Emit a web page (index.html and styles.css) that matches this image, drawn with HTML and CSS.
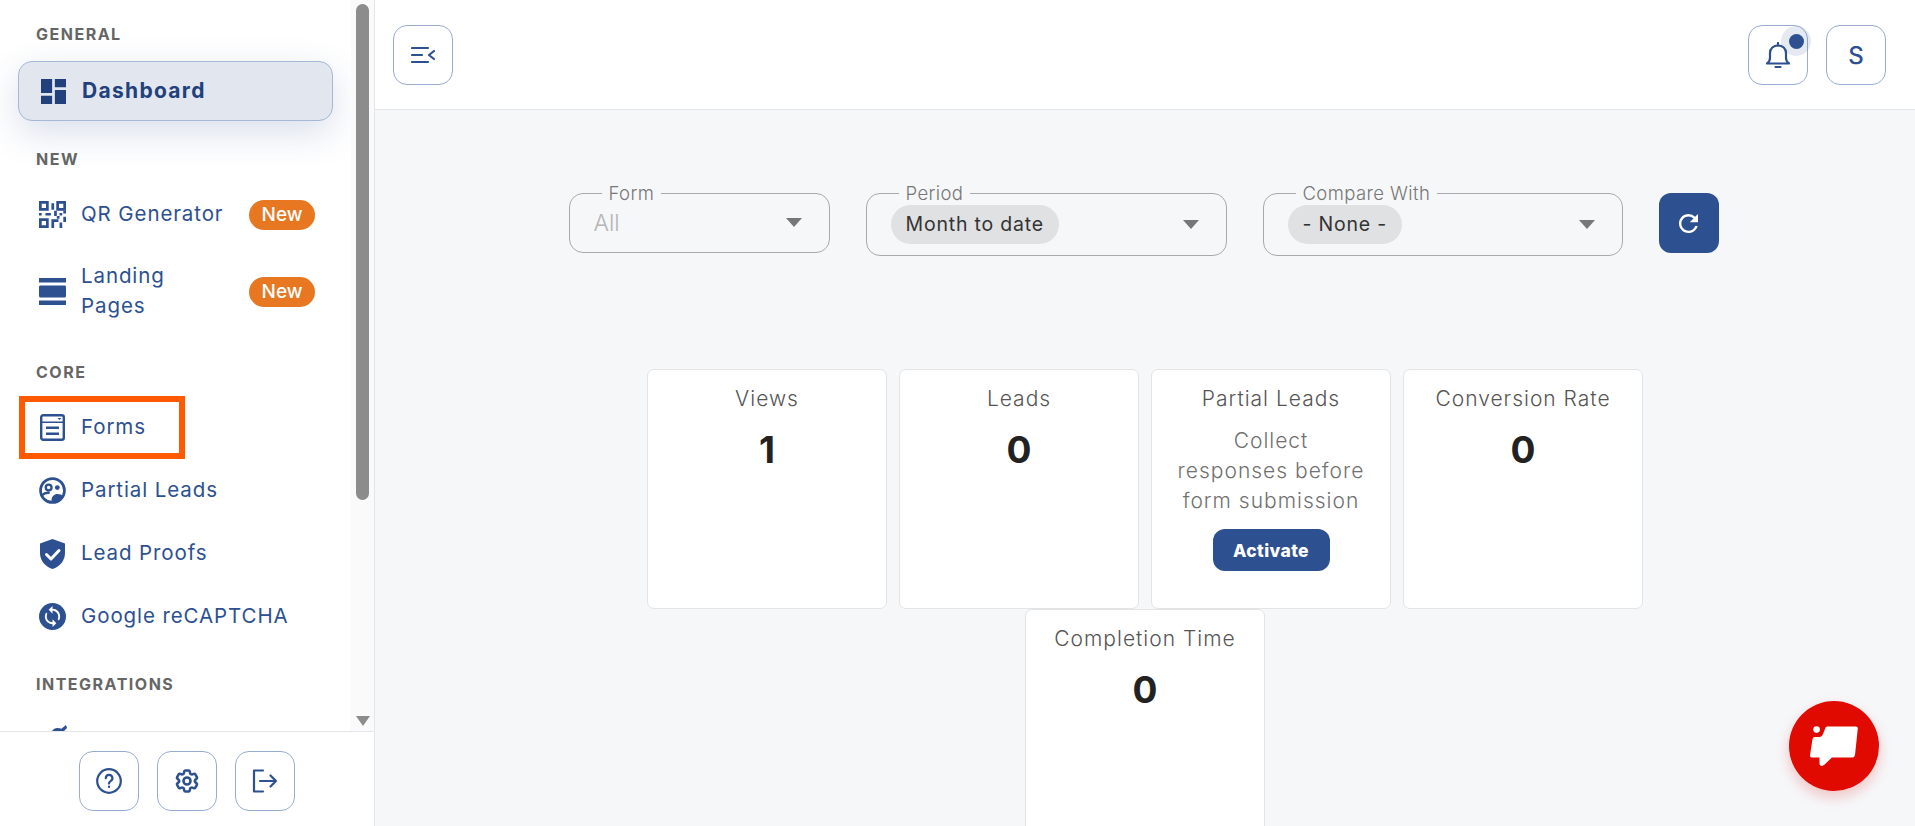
FILE: index.html
```html
<!DOCTYPE html>
<html lang="en">
<head>
<meta charset="utf-8">
<title>Dashboard</title>
<link rel="stylesheet" href="styles.css">
</head>
<body>
<div class="app">
  <aside class="sidebar">
    <div class="sidebar-top">
      <nav class="nav">
        <div class="section first">GENERAL</div>
        <a class="item active">
          <svg class="icon" viewBox="3 3 18 18"><path d="M3 13h8V3H3v10zm0 8h8v-6H3v6zm10 0h8V11h-8v10zm0-18v6h8V3h-8z"/></svg>
          <span class="label">Dashboard</span>
        </a>
        <div class="section new">NEW</div>
        <a class="item">
          <svg class="icon" viewBox="0 0 25 25"><path fill-rule="evenodd" d="M0 0h9v9H0zM2.500 2.500v4h4v-4zM16 0h9v9h-9zM18.500 2.500v4h4v-4zM0 16h9v9H0zM2.500 18.500v4h4v-4z"/><path d="M11.500 2h2.500v6h-2.500zM0 11h2.500v2.500H0zM6 11h5v2.500H6zM14 9h2.500v5H14zM19 11h2.500v2.500H19zM22.500 9H25v2.500h-2.500zM16.500 14h2.500v2.500h-2.500zM22.500 14.500H25v5h-2.500zM11.500 17H14v8h-2.500zM14 17h4v2.500h-4zM19 20h2.500v5H19z"/></svg>
          <span class="label">QR Generator</span>
          <span class="badge">New</span>
        </a>
        <a class="item tall">
          <svg class="icon" viewBox="2 3 19 18" preserveAspectRatio="none"><path d="M2 21h19v-3H2v3zM20 8H3c-.55 0-1 .45-1 1v6c0 .55.45 1 1 1h17c.55 0 1-.45 1-1V9c0-.55-.45-1-1-1zM2 3v3h19V3H2z"/></svg>
          <span class="label">Landing<br>Pages</span>
          <span class="badge">New</span>
        </a>
        <div class="section">CORE</div>
        <a class="item">
          <svg class="icon" viewBox="0 0 25 27"><rect class="stroke" x="1.200" y="1.200" width="22.600" height="24.600" rx="2"/><path d="M1 7.500h23v1.500H1zM6 12.500h13v2.500H6zM6 18.500h13v2.500H6zM17.500 4h4l-2 2z"/></svg>
          <span class="label">Forms</span>
          <span class="mark"></span>
        </a>
        <a class="item">
          <svg class="icon" viewBox="0 0 28 28"><circle class="stroke thick" cx="14" cy="14" r="12.400"/><circle class="stroke" cx="10" cy="11" r="3"/><circle cx="19" cy="11" r="2.500"/><path d="M13 26.500v-3c0-3.500 3-6 6-6 2.500 0 5 .8 6.500 2-2 4-6 7-12.500 7z"/><path class="stroke" d="M3 19c2-2 5-3 8-2.500"/></svg>
          <span class="label">Partial Leads</span>
        </a>
        <a class="item">
          <svg class="icon shield" viewBox="0 0 25 30"><path d="M12.500 0 25 4.500V14c0 7.500-5 13.500-12.500 16C5 27.500 0 21.500 0 14V4.500z"/><path class="check" d="M6.500 15.500l4.500 4.500 8-8.500"/></svg>
          <span class="label">Lead Proofs</span>
        </a>
        <a class="item">
          <svg class="icon" viewBox="0 0 24 24"><circle cx="12" cy="12" r="12"/><path class="sync" d="M12 4V1L8 5l4 4V6c3.310 0 6 2.690 6 6 0 1.010-.25 1.970-.7 2.800l1.460 1.460C19.540 15.030 20 13.570 20 12c0-4.420-3.580-8-8-8zm0 14c-3.310 0-6-2.690-6-6 0-1.010.25-1.970.7-2.800L5.240 7.740C4.460 8.970 4 10.430 4 12c0 4.420 3.580 8 8 8v3l4-4-4-4v3z"/></svg>
          <span class="label">Google reCAPTCHA</span>
        </a>
        <div class="section last">INTEGRATIONS</div>
        <a class="item">
          <svg class="icon open" viewBox="0 0 27 27"><path d="M12 8q2-5 6-5t4 1l5-4 1 3-4 4v10H12z"/></svg>
          <span class="label">All Integrations</span>
        </a>
      </nav>
      <div class="track">
        <div class="thumb"></div>
        <div class="track-arrow"></div>
      </div>
    </div>
    <div class="sidebar-foot">
      <button class="square">
        <svg class="line" width="26" height="26" viewBox="0 0 26 26"><circle cx="13" cy="13" r="11.800"/><path d="M9.800 10.200a3.300 3.300 0 1 1 4.800 2.900c-1 .6-1.600 1.300-1.600 2.500"/><path d="M13 18.500v.6"/></svg>
      </button>
      <button class="square">
        <svg class="line" width="28" height="28" viewBox="0 0 24 24"><path d="M9.594 3.940c.09-.542.56-.94 1.110-.94h2.593c.55 0 1.020.398 1.110.94l.213 1.281c.063.374.313.686.645.870.074.04.147.083.22.127.325.196.72.257 1.075.124l1.217-.456a1.125 1.125 0 0 1 1.370.49l1.296 2.247a1.125 1.125 0 0 1-.26 1.431l-1.003.827c-.293.241-.438.613-.43.992a7.723 7.723 0 0 1 0 .255c-.008.378.137.75.43.991l1.004.827c.424.35.534.955.26 1.430l-1.298 2.247a1.125 1.125 0 0 1-1.369.491l-1.217-.456c-.355-.133-.75-.072-1.076.124a6.470 6.470 0 0 1-.22.128c-.331.183-.581.495-.644.869l-.213 1.281c-.09.543-.56.94-1.110.94h-2.594c-.55 0-1.019-.398-1.110-.94l-.213-1.281c-.062-.374-.312-.686-.644-.870a6.520 6.520 0 0 1-.22-.127c-.325-.196-.72-.257-1.076-.124l-1.217.456a1.125 1.125 0 0 1-1.369-.49l-1.297-2.247a1.125 1.125 0 0 1 .26-1.431l1.004-.827c.292-.24.437-.613.43-.991a6.932 6.932 0 0 1 0-.255c.007-.38-.138-.751-.43-.992l-1.004-.827a1.125 1.125 0 0 1-.26-1.430l1.297-2.247a1.125 1.125 0 0 1 1.370-.491l1.216.456c.356.133.751.072 1.076-.124.072-.044.146-.086.22-.128.332-.183.582-.495.644-.869l.214-1.280Z"/><circle cx="12" cy="12" r="3"/></svg>
      </button>
      <button class="square">
        <svg class="line" width="26" height="24" viewBox="0 0 26 24"><path d="M11 1.500H2v21h9"/><path d="M8 12h16M18.500 6.500 24 12l-5.500 5.500"/></svg>
      </button>
    </div>
  </aside>

  <main class="main">
    <header class="topbar">
      <button class="square">
        <svg class="line" width="24" height="18" viewBox="0 0 24 18"><path d="M1 2h16M1 9h10M1 16h16M23 5l-5 4 5 4"/></svg>
      </button>
      <div class="topbar-right">
        <button class="square bell">
          <svg class="line" width="24" height="27" viewBox="0 0 24 27"><path d="M1 21.500h22c-2-1.500-3-3-3-5.500v-5c0-4.500-3.500-7.500-8-7.500S4 6.500 4 11v5c0 2.500-1 4-3 5.500z"/><path d="M12 1v2.500"/><path d="M9.500 25h5"/></svg>
          <span class="dot"></span>
        </button>
        <button class="square avatar">S</button>
      </div>
    </header>

    <section class="content">
      <div class="filters">
        <fieldset class="select short">
          <legend>Form</legend>
          <span class="placeholder">All</span>
          <span class="caret"></span>
        </fieldset>
        <fieldset class="select period">
          <legend>Period</legend>
          <span class="chip">Month to date</span>
          <span class="caret"></span>
        </fieldset>
        <fieldset class="select compare">
          <legend>Compare With</legend>
          <span class="chip">- None -</span>
          <span class="caret"></span>
        </fieldset>
        <button class="refresh">
          <svg width="19" height="19" viewBox="4 4 16 16"><path d="M17.650 6.350A7.958 7.958 0 0 0 12 4c-4.420 0-7.990 3.580-7.990 8s3.570 8 7.990 8c3.730 0 6.840-2.550 7.730-6h-2.080A5.990 5.990 0 0 1 12 18c-3.310 0-6-2.690-6-6s2.690-6 6-6c1.660 0 3.140.69 4.220 1.780L13 11h7V4l-2.350 2.350z"/></svg>
        </button>
      </div>

      <div class="cards">
        <div class="card"><div class="card-title">Views</div><div class="card-value">1</div></div>
        <div class="card"><div class="card-title">Leads</div><div class="card-value">0</div></div>
        <div class="card">
          <div class="card-title">Partial Leads</div>
          <p class="card-text">Collect<br>responses before<br>form submission</p>
          <button class="activate">Activate</button>
        </div>
        <div class="card"><div class="card-title">Conversion Rate</div><div class="card-value">0</div></div>
        <div class="card"><div class="card-title">Completion Time</div><div class="card-value">0</div></div>
      </div>
    </section>

    <button class="chat">
      <svg width="90" height="90" viewBox="0 0 90 90"><circle cx="27.600" cy="28.600" r="3.300"/><path d="M38 25.500h29q2 0 1.800 2L66 54q-.4 2.600-3 2.600H43L35 64q-3.500 2.500-4.500-1v-6.400H23q-2.200 0-2-2L23.500 38q.3-2 2.500-2h5q2 0 3-3l2-5q.5-2.500 2-2.500z"/></svg>
    </button>
  </main>
</div>
</body>
</html>
```
FILE: styles.css
```css
* { box-sizing: border-box; }
html, body { margin: 0; height: 100%; overflow: hidden; }
body { font-family: Inter, "Noto Sans", sans-serif; color: #2d5090; background: #f6f7f9; }
button { font-family: inherit; cursor: pointer; }

.app { display: flex; height: 826px; }

/* Sidebar */
.sidebar { width: 375px; flex: none; display: flex; flex-direction: column; background: #fff; border-right: 1px solid #e3e5ea; }
.sidebar-top { height: 731px; flex: none; display: flex; overflow: hidden; }
.nav { width: 351px; flex: none; padding: 0 18px; overflow: hidden; }
.section { height: 24px; line-height: 24px; margin: 23px 0 12px 18px; font-size: 16px; font-weight: 700; letter-spacing: 1.5px; color: #666; }
.section.first { margin: 22px 0 15px 18px; }
.section.new { margin-top: 26px; margin-bottom: 12px; }
.section.last { margin-top: 24px; margin-bottom: 14px; }
.item { position: relative; display: flex; align-items: center; gap: 15px; height: 63px; padding: 0 18px 0 21px; font-size: 20.500px; letter-spacing: .9px; line-height: 30px; color: #2d5090; }
.item.tall { height: 91px; }
.item.active { height: 60px; border: 1px solid #a5b8d8; border-radius: 14px; background: #e1e6ef; box-shadow: 0 12px 36px rgba(45, 80, 144, .18); color: #21407c; font-size: 21px; letter-spacing: 1.3px; font-weight: 700; padding-left: 22px; gap: 16px; }
.item.active .icon { width: 25px; height: 25px; fill: #21407c; }
.icon { width: 27px; height: 27px; flex: none; fill: #2d5090; }
.icon.shield { width: 25px; height: 30px; margin: 0 1px; }
.icon.open { overflow: visible; transform: translateY(-3px); }
.label { flex: 1; white-space: nowrap; padding-bottom: 1px; }
.badge { flex: none; width: 66px; height: 30px; line-height: 30px; border-radius: 15px; text-align: center; background: #e87722; color: #fff; font-size: 19px; letter-spacing: 0; font-weight: 500; }
.mark { position: absolute; left: 1px; top: 0; width: 166px; height: 63px; border: 6px solid #ff5a00; }
.stroke { fill: none; stroke: #2d5090; stroke-width: 2.4; }
.stroke.thick { stroke-width: 2.8; }
.check { fill: none; stroke: #fff; stroke-width: 3; stroke-linecap: round; stroke-linejoin: round; }
.sync { fill: #fff; transform: translate(1.800px, 1.800px) scale(.85); }

.track { width: 23px; flex: none; background: #fafafa; padding: 4px 5px 0; display: flex; flex-direction: column; }
.thumb { height: 496px; border-radius: 7px; background: #8c8c8c; }
.track-arrow { width: 0; height: 0; margin: 216px auto 0; border: 7px solid transparent; border-top: 10px solid #8c8c8c; border-bottom: 0; }

.sidebar-foot { flex: 1; display: flex; justify-content: center; gap: 18px; padding-top: 19px; border-top: 1px solid #e3e5ea; }

.square { position: relative; width: 60px; height: 60px; padding: 0; display: flex; align-items: center; justify-content: center; background: #fff; border: 1px solid #98acd0; border-radius: 14px; color: #2d5090; }
.line { fill: none; stroke: #2d5090; stroke-width: 2.2; stroke-linecap: round; stroke-linejoin: round; }
.avatar { font-size: 24px; font-weight: 500; }
.dot { position: absolute; top: 0; right: -4px; width: 30px; height: 30px; border-radius: 50%; background: rgba(45, 80, 144, .12); display: block; }
.dot::after { content: ""; display: block; width: 15px; height: 15px; margin: 7.500px; border-radius: 50%; background: #2d5090; }

/* Main */
.main { position: relative; flex: 1; min-width: 0; display: flex; flex-direction: column; overflow: hidden; }
.topbar { height: 110px; flex: none; display: flex; justify-content: space-between; padding: 25px 29px 0 18px; background: #fff; border-bottom: 1px solid #e3e5ea; }
.topbar-right { display: flex; gap: 18px; }

.content { padding-top: 72px; display: flex; flex-direction: column; align-items: center; }
.filters { display: flex; align-items: flex-start; gap: 36px; margin-left: -3px; }
.select { margin: 0; padding: 0 27px 11px 24px; min-width: 0; border: 1px solid #a9a9a9; border-radius: 14px; display: flex; align-items: center; justify-content: space-between; }
.select legend { margin-left: 8px; padding: 0 7px; font-size: 18.500px; letter-spacing: .4px; line-height: 22px; color: #777; font-weight: 300; }
.short { width: 261px; height: 71px; }
.period { width: 361px; height: 74px; padding-bottom: 10px; }
.compare { width: 360px; height: 74px; padding-bottom: 10px; }
.placeholder { font-size: 23px; color: #b5b5b5; font-weight: 300; }
.chip { height: 39px; line-height: 39px; padding: 0 15px; border-radius: 20px; background: #e0e1e3; color: #333; font-size: 19.500px; letter-spacing: .8px; }
.caret { width: 0; height: 0; border: 8px solid transparent; border-top: 9px solid #777; border-bottom: 0; }
.refresh { width: 60px; height: 60px; margin-top: 11px; padding: 0; border: 0; border-radius: 12px; background: #2d5090; display: flex; align-items: center; justify-content: center; }
.refresh svg { fill: #fff; }

.cards { width: 1020px; margin-top: 113px; display: flex; flex-wrap: wrap; justify-content: center; gap: 0 12px; }
.card { width: 240px; height: 240px; padding: 17px 10px 0; background: #fff; border: 1px solid #e3e4e6; border-radius: 7px; text-align: center; }
.card-title { height: 24px; line-height: 24px; font-size: 21px; letter-spacing: 1px; font-weight: 300; color: #555; }
.card-value { margin-top: 17px; line-height: 44px; font-size: 37px; font-weight: 700; color: #222; }
.card-text { margin: 15px 0 13px; font-size: 21px; line-height: 30px; letter-spacing: 1px; color: #707070; font-weight: 300; }
.activate { width: 117px; height: 42px; padding: 0; border: 0; border-radius: 12px; background: #2d5090; color: #fff; font-size: 17.500px; letter-spacing: .4px; font-weight: 800; }

.chat { position: absolute; right: 36px; bottom: 35px; width: 90px; height: 90px; padding: 0; border: 0; border-radius: 50%; background: #e00a00; box-shadow: 0 6px 14px rgba(224, 10, 0, .22); }
.chat svg { display: block; fill: #fff; }
```
